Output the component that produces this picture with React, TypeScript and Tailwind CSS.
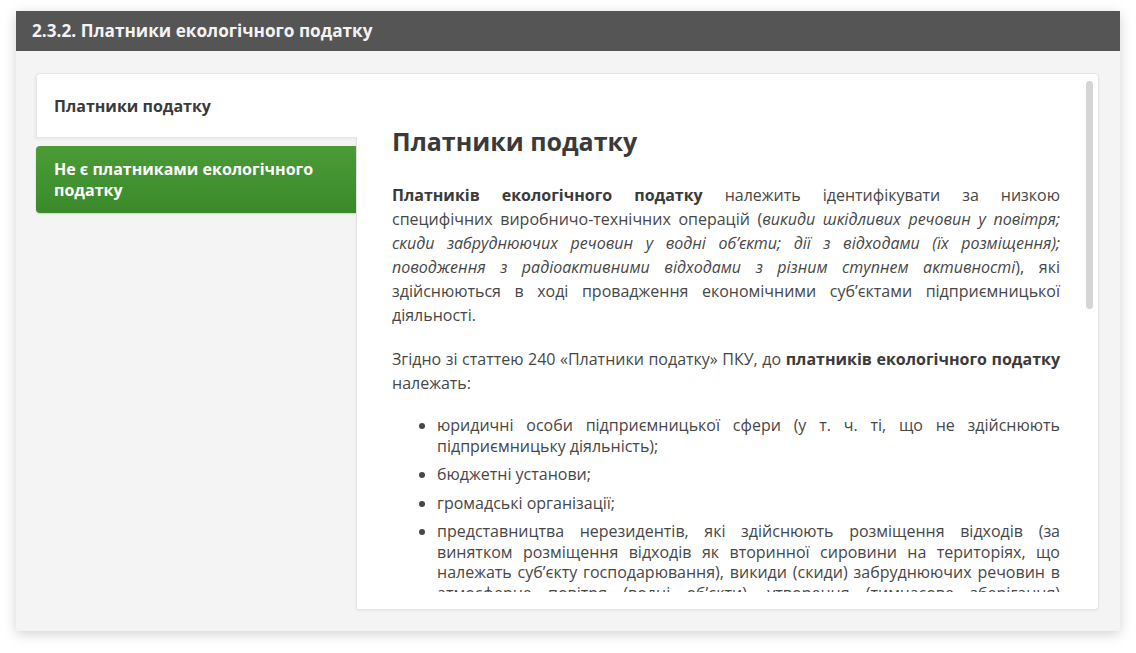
import React from 'react';

const tabs = [
  { id: 'payers', title: 'Платники податку' },
  { id: 'not-payers', title: 'Не є платниками екологічного податку' },
];

const listItems: React.ReactNode[] = [
  'юридичні особи підприємницької сфери (у т. ч. ті, що не здійснюють підприємницьку діяльність);',
  'бюджетні установи;',
  'громадські організації;',
  'представництва нерезидентів, які здійснюють розміщення відходів (за винятком розміщення відходів як вторинної сировини на територіях, що належать суб’єкту господарювання), викиди (скиди) забруднюючих речовин в атмосферне повітря (водні об’єкти), утворення (тимчасове зберігання) радіоактивних відходів;',
  'фізичні особи — підприємці, які здійснюють викиди забруднюючих речовин в атмосферне повітря.',
];

const App: React.FC = () => {
  const active = 'payers';

  return (
    <div className="min-h-screen bg-white pt-[11px] pl-[16px] font-['Open_Sans',sans-serif]">
      <div className="w-[1104px] shadow-[0_3px_12px_rgba(0,0,0,0.18)]">
        <div className="h-[40px] bg-[#555555] px-[16px] flex items-center">
          <h1 className="text-[17.2px] font-bold text-[#f3f3f3] leading-none">2.3.2. Платники екологічного податку</h1>
        </div>

        <div className="bg-[#f4f4f4] pt-[22px] pb-[21px] pl-[20px] pr-[21px] flex">
          <div className="w-[320px] flex flex-col gap-[8px] shrink-0">
            {tabs.map((tab) =>
              tab.id === active ? (
                <div
                  key={tab.id}
                  className="relative z-10 -mr-px bg-white rounded-tl-[4px] border border-r-0 border-[#e6e6e6] pl-[17px] pr-[20px] pt-[22px] pb-[20px] text-[16px] leading-[21px] font-bold text-[#3a3a3a] shadow-[-1px_1px_3px_rgba(0,0,0,0.06)]"
                >
                  {tab.title}
                </div>
              ) : (
                <div
                  key={tab.id}
                  className="rounded-l-[4px] bg-gradient-to-b from-[#4b9c37] to-[#3a8a2b] pl-[18px] pr-[30px] pt-[13px] pb-[12px] text-[16px] leading-[21px] font-bold text-white shadow-[0_1px_2px_rgba(0,0,0,0.15)]"
                >
                  {tab.title}
                </div>
              )
            )}
          </div>

          <div className="relative h-[537px] flex-1 bg-white border border-[#e4e4e4] rounded-r-[4px] pb-[17px] flex flex-col shadow-[0_1px_3px_rgba(0,0,0,0.05)]">
            <div className="absolute top-[7px] right-[5px] w-[7px] h-[228px] rounded-full bg-[#d5d5d5]" />
            <div className="flex-1 overflow-hidden pl-[35px] pr-[38px] pt-[52px] text-[#474747]">
              <h2 className="text-[25px] leading-[31px] font-bold text-[#3a3a3a] mb-[26px]">Платники податку</h2>

              <p className="text-[16px] leading-[24px] text-justify mb-[20px]">
                <strong className="font-bold text-[#3a3a3a]">Платників екологічного податку</strong> належить ідентифікувати за низкою
                специфічних&nbsp;виробничо-технічних операцій (
                <em>
                  викиди шкідливих речовин у повітря; скиди забруднюючих речовин у водні об’єкти; дії з відходами (їх
                  розміщення); поводження&nbsp;з&nbsp;радіоактивними відходами з різним ступнем активності
                </em>
                ), які здійснюються&nbsp;в&nbsp;ході провадження економічними суб’єктами підприємницької діяльності.
              </p>

              <p className="text-[16px] leading-[24px] text-justify mb-[20px]">
                Згідно зі статтею 240 «Платники податку» ПКУ, до{' '}
                <strong className="font-bold text-[#3a3a3a]">платників екологічного податку</strong> належать:
              </p>

              <ul className="list-disc pl-[45px] flex flex-col gap-[8px] text-[16px] leading-[20.5px] text-justify">
                {listItems.map((item, i) => (
                  <li key={i}>{item}</li>
                ))}
              </ul>
            </div>
          </div>
        </div>
      </div>
    </div>
  );
};

export default App;
